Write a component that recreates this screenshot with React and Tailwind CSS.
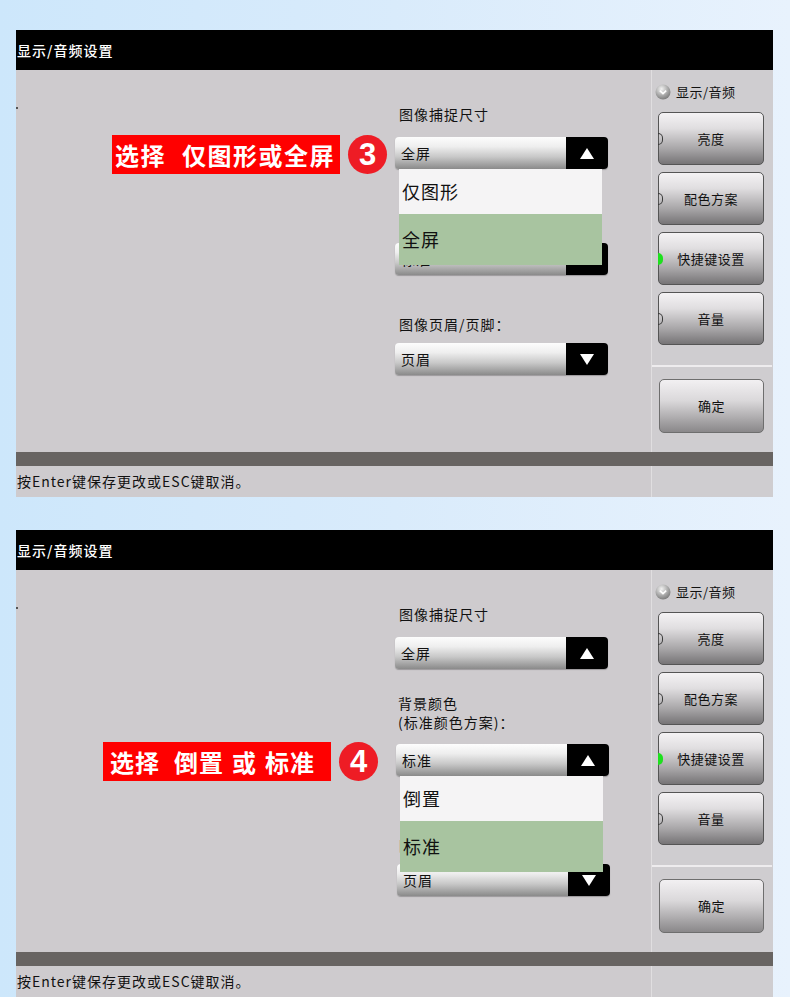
import React from "react";

function Triangle({ up }) {
  return (
    <svg width="14" height="11" viewBox="0 0 14 11">
      <path d={up ? "M7 0 L14 11 L0 11 Z" : "M0 0 L14 0 L7 11 Z"} fill="#ffffff" />
    </svg>
  );
}

function Dropdown({ value, up }) {
  return (
    <div className="flex h-[32px] w-[213px] overflow-hidden rounded-[4px] shadow-[0_1px_1px_rgba(0,0,0,0.25)]">
      <div className="flex flex-1 items-center bg-[linear-gradient(to_bottom,#fdfdfd_0%,#eeeeee_30%,#c8c8c8_62%,#8a8a8a_100%)] pl-[6px] text-[14px] tracking-[1px] text-[#111]">
        {value}
      </div>
      <div className="flex w-[42px] items-center justify-center bg-black">
        <Triangle up={up} />
      </div>
    </div>
  );
}

function OpenList({ items, selected }) {
  return (
    <div className="absolute left-[4px] top-full z-20 flex w-[203px] flex-col">
      {items.map((it, i) => (
        <div
          key={it}
          className={
            i === selected
              ? "flex h-[51px] items-center bg-[#a8c4a0] pl-[3px] text-[18px] tracking-[1px] text-[#111]"
              : "flex h-[45px] items-center bg-[#f5f4f5] pl-[3px] text-[18px] tracking-[1px] text-[#111]"
          }
        >
          {it}
        </div>
      ))}
    </div>
  );
}

function Badge({ n }) {
  return (
    <div className="flex h-[39px] w-[39px] items-center justify-center rounded-full bg-[#ee1c25] font-['Liberation_Sans',sans-serif] text-[31px] font-bold leading-none text-white">
      {n}
    </div>
  );
}

function SideButton({ label, green }) {
  return (
    <div className="relative flex h-[53px] w-[106px] items-center justify-center rounded-[5px] border border-[#555] bg-[linear-gradient(to_bottom,#f4f2f4_0%,#e0dee0_30%,#a8a6a8_70%,#767476_100%)] text-[13px] tracking-[0.5px] text-[#111]">
      {label}
      <span
        className={
          green
            ? "absolute left-[-1px] top-[20px] h-[12px] w-[5px] rounded-r-full bg-[#1ee01e]"
            : "absolute left-[-1px] top-[20px] h-[12px] w-[5px] rounded-r-full border border-l-0 border-[#3a3a3a]"
        }
      />
    </div>
  );
}

function CheckIcon() {
  return (
    <svg width="16" height="16" viewBox="0 0 16 16">
      <defs>
        <radialGradient id="cg" cx="0.4" cy="0.3" r="0.8">
          <stop offset="0" stopColor="#f2f2f2" />
          <stop offset="0.55" stopColor="#a8a8a8" />
          <stop offset="1" stopColor="#6e6e6e" />
        </radialGradient>
      </defs>
      <circle cx="8" cy="8" r="7.5" fill="url(#cg)" />
      <path d="M4.8 6.6 L8 9.6 L11.2 6.6" fill="none" stroke="#ffffff" strokeWidth="1.5" />
    </svg>
  );
}

function RightColumn() {
  return (
    <div className="flex w-[122px] flex-col border-l border-[#e0dee0] bg-[#cfcdd0]">
      <div className="ml-[3px] mt-[14px] flex h-[16px] items-center gap-[5px] text-[13px] tracking-[0.5px] text-[#111]">
        <CheckIcon />
        <span>显示/音频</span>
      </div>
      <div className="ml-[6px] mt-[12px] flex flex-col gap-[7px]">
        <SideButton label="亮度" />
        <SideButton label="配色方案" />
        <SideButton label="快捷键设置" green />
        <SideButton label="音量" />
      </div>
      <div className="mr-[1px] mt-[20px] h-[2px] bg-[#eeecee]" />
      <div className="ml-[7px] mt-[12px] flex h-[54px] w-[105px] items-center justify-center rounded-[5px] border border-[#6e6e6e] bg-[linear-gradient(to_bottom,#f2f0f2_0%,#dad8da_40%,#a4a2a4_80%,#8a888a_100%)] text-[13px] tracking-[0.5px] text-[#111]">
        确定
      </div>
    </div>
  );
}

function Panel({ children }) {
  return (
    <div className="flex w-[757px] flex-col">
      <div className="flex h-[40px] items-center bg-black pl-[1px] text-[14px] font-medium tracking-[1px] text-white">
        显示/音频设置
      </div>
      <div className="flex h-[382px] bg-[#cecbce]">
        <div className="flex w-[635px]">
          <div className="w-[379px] pt-[37px]">
            <div className="h-[2px] w-[2px] bg-[#555]" />
          </div>
          <div className="flex w-[213px] flex-col">{children}</div>
        </div>
        <RightColumn />
      </div>
      <div className="h-[14px] bg-[#686462]" />
      <div className="flex h-[31px] bg-[#cecbce]">
        <div className="flex w-[635px] items-center pl-[1px] text-[14px] tracking-[1px] text-[#111]">
          按Enter键保存更改或ESC键取消。
        </div>
        <div className="flex-1 border-l border-[#e0dee0] bg-[#cfcdd0]" />
      </div>
    </div>
  );
}

export default function App() {
  return (
    <div className="flex min-h-[997px] w-[790px] flex-col gap-[33px] bg-[linear-gradient(to_right,#cde7fb_0%,#d9ebfb_50%,#e8f2fd_100%)] pl-[16px] pt-[30px] font-['Noto_Sans_CJK_SC','Noto_Sans',sans-serif]">
      <Panel>
        <div className="mt-[35px] pl-[4px] text-[14px] leading-[18px] tracking-[1px] text-[#111]">图像捕捉尺寸</div>
        <div className="relative z-10 mt-[14px]">
          <div className="absolute right-full top-[-2px] mr-[8px] flex items-center gap-[8px]">
            <div className="flex h-[39px] w-[228px] items-center whitespace-nowrap bg-[#ff0000] pl-[3px] text-[24px] font-bold tracking-[1.5px] text-white">
              <span>选择</span>
              <span className="ml-[16px]">仅图形或全屏</span>
            </div>
            <Badge n="3" />
          </div>
          <Dropdown value="全屏" up />
          <OpenList items={["仅图形", "全屏"]} selected={1} />
        </div>
        <div className="mt-[25px] pl-[4px] text-[14px] leading-[19px] tracking-[1px] text-[#111]">
          背景颜色
          <br />
          (标准颜色方案)：
        </div>
        <div className="mt-[11px]">
          <Dropdown value="标准" up />
        </div>
        <div className="mt-[40px] pl-[4px] text-[14px] leading-[18px] tracking-[1px] text-[#111]">图像页眉/页脚：</div>
        <div className="mt-[10px]">
          <Dropdown value="页眉" />
        </div>
      </Panel>
      <Panel>
        <div className="mt-[35px] pl-[4px] text-[14px] leading-[18px] tracking-[1px] text-[#111]">图像捕捉尺寸</div>
        <div className="mt-[14px]">
          <Dropdown value="全屏" up />
        </div>
        <div className="mt-[25px] pl-[3px] text-[14px] leading-[19px] tracking-[1px] text-[#111]">
          背景颜色
          <br />
          (标准颜色方案)：
        </div>
        <div className="relative z-10 ml-[1px] mt-[12px]">
          <div className="absolute right-full top-[-2px] mr-[18px] flex items-center gap-[8px]">
            <div className="flex h-[39px] w-[228px] items-center whitespace-nowrap bg-[#ff0000] pl-[7px] text-[24px] font-bold tracking-[1px] text-white">
              <span>选择</span>
              <span className="ml-[14px]">倒置</span>
              <span className="ml-[8px]">或</span>
              <span className="ml-[8px]">标准</span>
            </div>
            <Badge n="4" />
          </div>
          <Dropdown value="标准" up />
          <OpenList items={["倒置", "标准"]} selected={1} />
        </div>
        <div className="mt-[60px] pl-[4px] text-[14px] leading-[18px] tracking-[1px] text-[#111]">图像页眉/页脚：</div>
        <div className="ml-[2px] mt-[10px]">
          <Dropdown value="页眉" />
        </div>
      </Panel>
    </div>
  );
}
